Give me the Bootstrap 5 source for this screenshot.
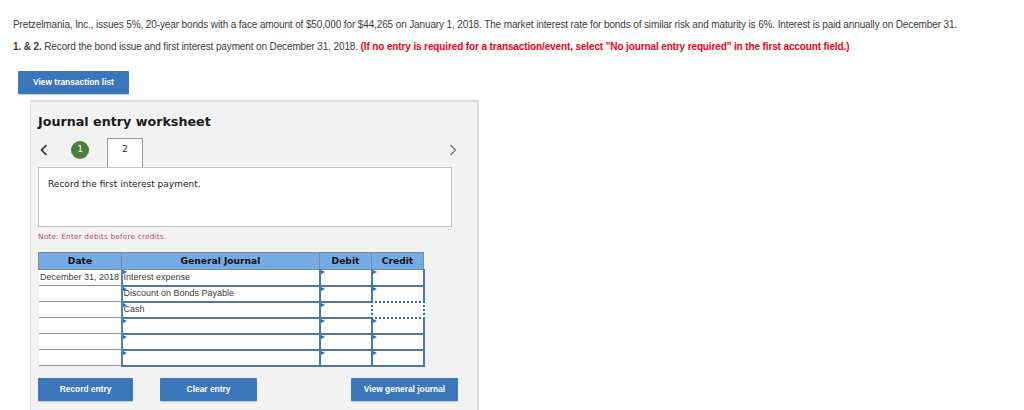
<!DOCTYPE html>
<html lang="en">
<head>
  <meta charset="UTF-8" />
  <meta name="viewport" content="width=device-width, initial-scale=1.0" />
  <title>Journal entry worksheet</title>
  <link href="https://cdn.jsdelivr.net/npm/bootstrap@5.3.0/dist/css/bootstrap.min.css" rel="stylesheet" />
  <style>
    html, body { height: 410px; overflow: hidden; }
    body { background: #fff; color: #3b3b3b; font-family: "Liberation Sans", Arial, sans-serif; font-size: 10px; }
    .page-wrap { padding: 18px 0 0 13px; }
    .question { line-height: 14px; margin: 0 0 8px; white-space: nowrap; letter-spacing: -.125px; }
    .question.parts { margin-bottom: 17px; }
    .warn { color: #f00012; }
    .blue-btn { background: #3a76b9; color: #fff; border: 0; border-radius: 1px; font-family: "Liberation Sans", Arial, sans-serif; font-size: 8.4px; font-weight: 700; height: 23px; padding: 0; box-shadow: 0 1px 0 #b9cde4; }
    .blue-btn:hover { background: #3a76b9; color: #fff; }
    .list-btn { width: 111px; margin-left: 5px; }
    .sheet { width: 449px; height: 330px; margin: 6px 0 0 17px; background: #f2f2f2; border: solid #ddd; border-width: 2px 2px 0 0; border-left: 1px solid #e4e4e4; padding: 0 7px 0 7px; font-family: "DejaVu Sans", Verdana, sans-serif; }
    .sheet h2 { font-size: 12.7px; font-weight: 700; color: #1a1a1a; margin: 0; padding-top: 11px; padding-bottom: 1px; line-height: 17px; }
    .tab-row { height: 23px; margin: 7px 0 6px; }
    .arrow-left { width: 8px; height: 12px; margin-left: 2px; }
    .arrow-right { width: 8px; height: 12px; margin: 0 13px 0 auto; }
    .step-done { width: 18px; height: 18px; border-radius: 50%; background: #4a7f3c; color: #fff; font-size: 9px; margin-left: 23px; }
    .step-tab { width: 36px; height: 29px; margin: 0 0 -6px 18px; padding-bottom: 7px; background: #fff; border: 1px solid #999; border-bottom: 0; font-size: 9.5px; color: #333; position: relative; z-index: 1; }
    .prompt { width: 414px; height: 60px; background: #fff; border: 1px solid #c4c4c4; padding: 10px 9px; font-size: 9.03px; line-height: 12px; color: #222; }
    .note { color: #b5476b; font-size: 7.3px; margin: 5px 0 0; line-height: 10px; letter-spacing: .2px; }
    .journal { width: 385px; table-layout: fixed; border-collapse: collapse; margin: 10px 0 0 0; font-family: "Liberation Sans", Arial, sans-serif; font-size: 9px; }
    .journal th { background: #74abe4; height: 17px; padding: 2px 0 0; border: 1px solid #7a8a9c; font-family: "DejaVu Sans", Verdana, sans-serif; font-size: 9.15px; font-weight: 700; color: #111; text-align: center; }
    .journal td { height: 16px; padding: 0 0 1px; line-height: 12px; white-space: nowrap; background: #fff; }
    .journal td.date-cell { border-bottom: 1px solid #8b8b8b; text-align: center; color: #3b3b3b; border-right: 2px solid #5b80ac; }
    .journal td.entry { position: relative; border: 2px solid #4a78ad; border-top-width: 1px; padding-left: 1px; color: #3b3b3b; }
    .journal td.entry::before { content: ""; position: absolute; left: 0; top: 0; border-left: 4px solid #2d6db5; border-top: 2px solid transparent; border-bottom: 2px solid transparent; }
    .journal td.entry.picked::before { display: none; }
    .journal td.entry.picked::after { content: ""; position: absolute; inset: -2px -2px -2px -2px; z-index: 1; background: #fff; border: 2px dotted #2d6db5; }
    .action-row { width: 420px; margin-top: 11px; }
    .rec-btn { width: 95px; }
    .clr-btn { width: 97px; margin-left: 27px; }
    .gen-btn { width: 107px; margin-left: auto; }
  </style>
</head>
<body>
  <div class="page-wrap">
    <p class="question">Pretzelmania, Inc., issues 5%, 20-year bonds with a face amount of $50,000 for $44,265 on January 1, 2018. The market interest rate for bonds of similar risk and maturity is 6%. Interest is paid annually on December 31.</p>
    <p class="question parts"><b>1. &amp; 2.</b> Record the bond issue and first interest payment on December 31, 2018. <b class="warn">(If no entry is required for a transaction/event, select "No journal entry required" in the first account field.)</b></p>
    <button type="button" class="btn blue-btn list-btn">View transaction list</button>

    <div class="sheet">
      <h2>Journal entry worksheet</h2>
      <div class="tab-row d-flex align-items-center">
        <svg class="arrow-left" viewBox="0 0 8 12"><path d="M6.5 1 1.5 6l5 5" fill="none" stroke="#222" stroke-width="1.6"/></svg>
        <span class="step-done d-flex align-items-center justify-content-center">1</span>
        <span class="step-tab d-flex align-items-center justify-content-center">2</span>
        <svg class="arrow-right" viewBox="0 0 8 12"><path d="M1.5 1l5 5-5 5" fill="none" stroke="#777" stroke-width="1.3"/></svg>
      </div>
      <div class="prompt">Record the first interest payment.</div>
      <p class="note">Note: Enter debits before credits.</p>
      <table class="journal">
        <colgroup><col style="width:83px"><col style="width:198px"><col style="width:52px"><col style="width:52px"></colgroup>
        <thead>
          <tr><th>Date</th><th>General Journal</th><th>Debit</th><th>Credit</th></tr>
        </thead>
        <tbody>
          <tr><td class="date-cell">December 31, 2018</td><td class="entry">Interest expense</td><td class="entry"></td><td class="entry"></td></tr>
          <tr><td class="date-cell"></td><td class="entry">Discount on Bonds Payable</td><td class="entry"></td><td class="entry"></td></tr>
          <tr><td class="date-cell"></td><td class="entry">Cash</td><td class="entry"></td><td class="entry picked"></td></tr>
          <tr><td class="date-cell"></td><td class="entry"></td><td class="entry"></td><td class="entry"></td></tr>
          <tr><td class="date-cell"></td><td class="entry"></td><td class="entry"></td><td class="entry"></td></tr>
          <tr><td class="date-cell"></td><td class="entry"></td><td class="entry"></td><td class="entry"></td></tr>
        </tbody>
      </table>
      <div class="action-row d-flex">
        <button type="button" class="btn blue-btn rec-btn">Record entry</button>
        <button type="button" class="btn blue-btn clr-btn">Clear entry</button>
        <button type="button" class="btn blue-btn gen-btn">View general journal</button>
      </div>
    </div>
  </div>
  <script src="https://cdn.jsdelivr.net/npm/bootstrap@5.3.0/dist/js/bootstrap.bundle.min.js"></script>
</body>
</html>
